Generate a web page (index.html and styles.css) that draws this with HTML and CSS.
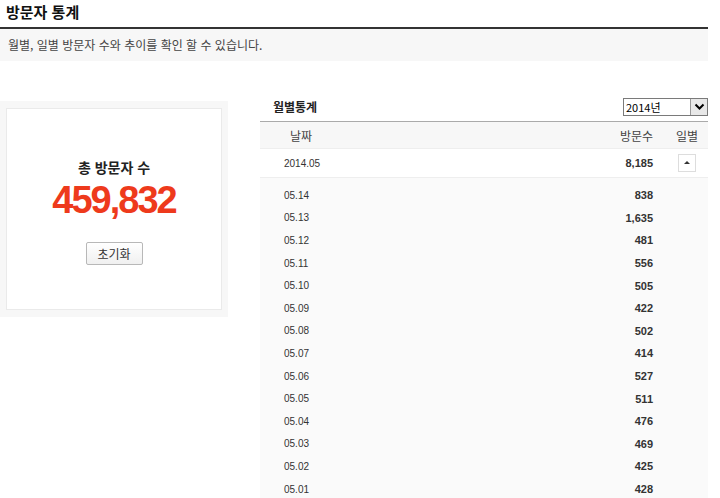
FILE: index.html
```html
<!DOCTYPE html>
<html lang="ko">
<head>
    <meta charset="UTF-8">
    <title>방문자 통계</title>
    <link rel="stylesheet" href="styles.css">
</head>
<body>
    <div class="wrap">
        <h2 class="page-title">방문자 통계</h2>
        <p class="page-desc">월별, 일별 방문자 수와 추이를 확인 할 수 있습니다.</p>

        <div class="stats">
            <div class="total-box">
                <div class="total-inner">
                    <h3>총 방문자 수</h3>
                    <strong class="total-num">459,832</strong>
                    <button type="button" class="btn-reset">초기화</button>
                </div>
            </div>

            <div class="monthly">
                <div class="monthly-head">
                    <h3>월별통계</h3>
                    <div class="year-select">
                        <span>2014년</span>
                        <i class="arrow">
                            <svg width="11" height="8" viewBox="0 0 11 8"><path d="M1.5 1.5 L5.5 5.5 L9.5 1.5" fill="none" stroke="#000" stroke-width="2"/></svg>
                        </i>
                    </div>
                </div>
                <div class="stat-list">
                    <div class="row head-row">
                        <span class="col-date">날짜</span>
                        <span class="col-num">방문수</span>
                        <span class="col-day">일별</span>
                    </div>
                    <div class="row month-row">
                        <span class="col-date">2014.05</span>
                        <span class="col-num">8,185</span>
                        <span class="col-day"><span class="btn-fold"></span></span>
                    </div>
                    <div class="day-list">
                        <div class="row day-row"><span class="col-date">05.14</span><span class="col-num">838</span><span class="col-day"></span></div>
                        <div class="row day-row"><span class="col-date">05.13</span><span class="col-num">1,635</span><span class="col-day"></span></div>
                        <div class="row day-row"><span class="col-date">05.12</span><span class="col-num">481</span><span class="col-day"></span></div>
                        <div class="row day-row"><span class="col-date">05.11</span><span class="col-num">556</span><span class="col-day"></span></div>
                        <div class="row day-row"><span class="col-date">05.10</span><span class="col-num">505</span><span class="col-day"></span></div>
                        <div class="row day-row"><span class="col-date">05.09</span><span class="col-num">422</span><span class="col-day"></span></div>
                        <div class="row day-row"><span class="col-date">05.08</span><span class="col-num">502</span><span class="col-day"></span></div>
                        <div class="row day-row"><span class="col-date">05.07</span><span class="col-num">414</span><span class="col-day"></span></div>
                        <div class="row day-row"><span class="col-date">05.06</span><span class="col-num">527</span><span class="col-day"></span></div>
                        <div class="row day-row"><span class="col-date">05.05</span><span class="col-num">511</span><span class="col-day"></span></div>
                        <div class="row day-row"><span class="col-date">05.04</span><span class="col-num">476</span><span class="col-day"></span></div>
                        <div class="row day-row"><span class="col-date">05.03</span><span class="col-num">469</span><span class="col-day"></span></div>
                        <div class="row day-row"><span class="col-date">05.02</span><span class="col-num">425</span><span class="col-day"></span></div>
                        <div class="row day-row"><span class="col-date">05.01</span><span class="col-num">428</span><span class="col-day"></span></div>
                    </div>
                </div>
            </div>
        </div>
    </div>
</body>
</html>
```

FILE: styles.css
```css
body {
    margin: 0;
    padding: 0;
    background: #fff;
    color: #333;
    font-family: "Liberation Sans", "Noto Sans CJK KR", sans-serif;
    font-size: 12px;
}
.wrap {
    width: 708px;
}
.page-title {
    margin: 0;
    height: 27px;
    padding-left: 6px;
    line-height: 24px;
    font-size: 15px;
    font-weight: bold;
    color: #111;
    font-family: "Noto Sans CJK KR", sans-serif;
    border-bottom: 2px solid #333;
}
.page-desc {
    margin: 0;
    height: 32px;
    line-height: 32px;
    padding-left: 8px;
    background: #f7f7f7;
    font-size: 12px;
    color: #444;
    font-family: "Noto Sans CJK KR", sans-serif;
}
.stats {
    display: flex;
    align-items: flex-start;
    margin-top: 35px;
}
.total-box {
    width: 216px;
    margin-top: 5px;
    padding: 7px 6px 7px 6px;
    background: #f7f7f7;
}
.total-inner {
    height: 202px;
    border: 1px solid #eaeaea;
    background: #fff;
    display: flex;
    flex-direction: column;
    align-items: center;
    box-sizing: border-box;
    padding-top: 48px;
}
.total-inner h3 {
    margin: 0;
    font-size: 14px;
    font-weight: bold;
    color: #222;
    font-family: "Noto Sans CJK KR", sans-serif;
    line-height: 20px;
}
.total-num {
    font-family: "Liberation Sans", Arial, sans-serif;
    font-size: 38px;
    font-weight: bold;
    color: #ee3a1c;
    letter-spacing: -2px;
    line-height: 40px;
    margin-top: 3px;
}
.btn-reset {
    margin-top: 22px;
    width: 57px;
    height: 23px;
    padding: 0;
    border: 1px solid #b8b8b8;
    border-radius: 2px;
    background: linear-gradient(#fff, #f0f0f0);
    font-family: "Noto Sans CJK KR", sans-serif;
    font-size: 12px;
    color: #333;
}
.monthly {
    margin-left: 32px;
    flex: 1;
}
.monthly-head {
    display: flex;
    justify-content: space-between;
    align-items: center;
    height: 25px;
    border-bottom: 1px solid #aaa;
}
.monthly-head h3 {
    margin: 0 0 4px 13px;
    font-size: 12px;
    font-weight: bold;
    color: #222;
    font-family: "Noto Sans CJK KR", sans-serif;
}
.year-select {
    display: flex;
    width: 85px;
    height: 18px;
    margin-bottom: 3px;
    border: 1px solid #7a7a7a;
    box-sizing: border-box;
    font-size: 11px;
    font-family: "Noto Sans CJK KR", sans-serif;
    color: #000;
}
.year-select span {
    flex: 1;
    line-height: 16px;
    padding-left: 2px;
}
.year-select .arrow {
    width: 16px;
    display: flex;
    align-items: center;
    justify-content: center;
    border-left: 1px solid #999;
    background: #e8e8e8;
}
.row {
    display: flex;
    align-items: center;
}
.col-date {
    flex: 1;
    padding-left: 24px;
}
.col-num {
    text-align: right;
    margin-right: 13px;
}
.col-day {
    width: 42px;
    display: flex;
    justify-content: center;
}
.head-row {
    height: 26px;
    background: #f7f7f7;
    border-bottom: 1px solid #eee;
    font-size: 12px;
    color: #444;
    font-family: "Noto Sans CJK KR", sans-serif;
}
.head-row .col-date {
    padding-left: 30px;
}
.month-row,
.day-row {
    font-size: 10px;
    color: #333;
}
.month-row .col-num,
.day-row .col-num {
    font-size: 11px;
    font-weight: bold;
}
.month-row {
    height: 28px;
    background: #fff;
    border-bottom: 1px solid #eee;
}
.day-list {
    background: #fafafa;
    padding-top: 6px;
}
.day-row {
    height: 22.6px;
}
.btn-fold {
    display: inline-block;
    width: 16px;
    height: 16px;
    border: 1px solid #ddd;
    background: #fff;
    position: relative;
}
.btn-fold::after {
    content: "";
    position: absolute;
    left: 5px;
    top: 6px;
    border-left: 3px solid transparent;
    border-right: 3px solid transparent;
    border-bottom: 3px solid #333;
}
```
